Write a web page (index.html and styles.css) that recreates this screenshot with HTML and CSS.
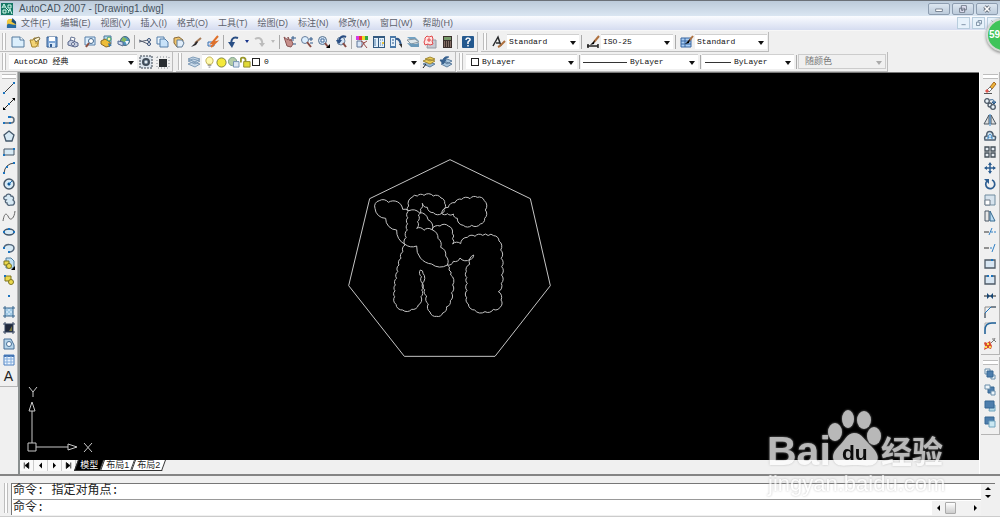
FILE: index.html
```html
<!DOCTYPE html>
<html lang="zh-CN">
<head>
<meta charset="utf-8">
<title>AutoCAD 2007 - [Drawing1.dwg]</title>
<link rel="stylesheet" href="styles.css">
</head>
<body>
<div class="app">
<header class="titlebar">
  <svg class="logo" viewBox="0 0 12 12"><path fill="#167765" d="M0 0h12v12H0z"/><path d="M1 5l2-4 2 4M2 4h2M7 2h3v3H7zM2 7h3v3H2zM7 10l2-4 2 5M5 5l3 3" fill="none" stroke="#d7fff0"/></svg>
  <h1>AutoCAD 2007 - [Drawing1.dwg]</h1>
  <div class="window-buttons">
    <button aria-label="最小化"><svg viewBox="0 0 12 12"><path d="M2 6h8v3H2z" fill="#fff" stroke="#677384"/></svg></button>
    <button aria-label="还原"><svg viewBox="0 0 12 12"><path d="M4 2h6v5H4zM2 5h6v5H2z" fill="#eef" stroke="#5f6977"/><path d="M4 7h2v1H4z" fill="#5f6977"/></svg></button>
    <button aria-label="关闭"><svg viewBox="0 0 12 12"><path d="M3 3l6 6m0-6l-6 6" stroke="#5f6977" stroke-width="4"/><path d="M3 3l6 6m0-6l-6 6" stroke="#fff" stroke-width="2"/></svg></button>
  </div>
</header>
<nav class="menubar">
  <svg class="doc" viewBox="0 0 12 12"><path d="M1 3l2-2h4l4 4v6H1z" fill="#efc73e"/><path d="M7 0l4 4v3L6 4z" fill="#174c7b"/><path d="M1 8c2-4 5 1 10-1v4H1z" fill="#276aa3"/></svg>
  <a href="#">文件(F)</a><a href="#">编辑(E)</a><a href="#">视图(V)</a><a href="#">插入(I)</a><a href="#">格式(O)</a><a href="#">工具(T)</a><a href="#">绘图(D)</a><a href="#">标注(N)</a><a href="#">修改(M)</a><a href="#">窗口(W)</a><a href="#">帮助(H)</a>
  <div class="doc-buttons">
    <button aria-label="最小化图形"><svg viewBox="0 0 12 12"><path d="M3 8h5" stroke="#71869b"/></svg></button>
    <button aria-label="还原图形"><svg viewBox="0 0 12 12"><path d="M5 3h4v4M3 5h4v4H3zM5 3v2M7 7h2" fill="none" stroke="#71869b"/></svg></button>
    <button aria-label="关闭图形"><svg viewBox="0 0 12 12"><path d="M3 3l6 6m0-6l-6 6" stroke="#71869b"/></svg></button>
  </div>
</nav>
<div class="badge">59</div>
<div class="toolbar">
  <div class="bar"><i class="grip"></i>
    <button aria-label="新建"><svg viewBox="0 0 12 12"><path d="M0 1h8l4 3v7H0z" fill="#dceffc" stroke="#547b9e"/><path d="M8 1v3h4" fill="#fff" stroke="#547b9e"/></svg></button>
    <button aria-label="打开"><svg viewBox="0 0 12 12"><path d="M1 4h3l1-2h5L9 8l-2 3H3z" fill="#f3d476" stroke="#a3822a"/><path d="M5 3l5-2 1 2-4 3z" fill="#fff8d3" stroke="#7b6c45"/><path d="M6 7h3v4" stroke="#b8902c" fill="none"/></svg></button>
    <button aria-label="保存"><svg viewBox="0 0 12 12"><path d="M1 1h10v10H1z" fill="#7fa7d6" stroke="#325c91"/><path d="M3 1h6v4H3z" fill="#fff"/><path d="M3 7h6v4H3z" fill="#d8e8f8"/><path d="M4 8h2v3H4z" fill="#325c91"/></svg></button>
    <i class="sep"></i>
    <button aria-label="打印"><svg viewBox="0 0 12 12"><path d="M4 1l4 1-1 4-4-1z" fill="#fff" stroke="#667494"/><path d="M1 6l3-2 7 3v3l-3 1-7-2z" fill="#c6cfe2" stroke="#59678c"/><circle cx="6" cy="8" r="1.5" fill="#fff" stroke="#59678c"/></svg></button>
    <button aria-label="打印预览"><svg viewBox="0 0 12 12"><path d="M1 1h10v8H1z" fill="#dcefff" stroke="#567fa8"/><circle cx="7" cy="5" r="2.5" fill="#fff" stroke="#41668c"/><path d="M5 7l-3 4" stroke="#8e4e3e" stroke-width="2"/></svg></button>
    <button aria-label="发布"><svg viewBox="0 0 12 12"><path d="M3 0h7v8H3z" fill="#b7daef" stroke="#4a769b"/><path d="M0 5l4-2 5 3v4l-4 1-5-3z" fill="#edbd37" stroke="#8a6823"/><circle cx="8" cy="3" r="2" fill="#fff4a7" stroke="#397"/><path d="M7 7l4 2-3 2z" fill="#3878af"/></svg></button>
    <button aria-label="三维 DWF"><svg viewBox="0 0 12 12"><circle cx="7" cy="5" r="4.5" fill="#4e94bf" stroke="#4d6b7d"/><path d="M5 1l4 2-2 3-4-1z" fill="#87b961"/><path d="M7 5h4l-2 4z" fill="#f3f7ff"/><path d="M0 5l5 1v4l-5-2z" fill="#cbd7ec" stroke="#536b94"/></svg></button>
    <i class="sep"></i>
    <button aria-label="剪切"><svg viewBox="0 0 12 12"><path d="M0 4l9 4M0 6l9-2" stroke="#555e70"/><circle cx="10" cy="4" r="1.5" fill="none" stroke="#344d76"/><circle cx="10" cy="8" r="1.5" fill="none" stroke="#344d76"/></svg></button>
    <button aria-label="复制"><svg viewBox="0 0 12 12"><path d="M1 1h7v7H1z" fill="#edf7ff" stroke="#557eaa"/><path d="M4 3h5l3 3v5H4z" fill="#c8e2f9" stroke="#557eaa"/></svg></button>
    <button aria-label="粘贴"><svg viewBox="0 0 12 12"><path d="M1 2l5-1 4 3-1 6-5 1-3-4z" fill="#efc46a" stroke="#8c6a36"/><path d="M4 4h5l2 3-2 4H4z" fill="#e1eefa" stroke="#607c98"/></svg></button>
    <button aria-label="特性匹配"><svg viewBox="0 0 12 12"><path d="M11 2L5 7" stroke="#a77b58" stroke-width="2"/><path d="M7 5L1 11l5-2 2-3z" fill="#29272b"/></svg></button>
    <button aria-label="块编辑器"><svg viewBox="0 0 12 12"><path d="M1 6h6v4H1z" fill="#dae7ff" stroke="#3970ae"/><path d="M11 0L5 7l4-1-5 5" stroke="#df712b" stroke-width="2" fill="none"/></svg></button>
    <i class="sep"></i>
    <button aria-label="放弃"><svg viewBox="0 0 12 12"><path d="M10 2C5 0 2 4 4 10" fill="none" stroke="#294e84" stroke-width="2"/><path d="M0 6l4 6 3-6z" fill="#294e84"/></svg></button>
    <button class="caret" aria-label="放弃列表"></button>
    <button aria-label="重做"><svg viewBox="0 0 12 12"><path d="M1 3c5-3 8 1 7 6" fill="none" stroke="#bdbdbd" stroke-width="2"/><path d="M5 7h6l-3 4z" fill="#bbb"/></svg></button>
    <button class="caret faint" aria-label="重做列表"></button>
    <i class="sep"></i>
    <button aria-label="实时平移"><svg viewBox="0 0 12 12"><path d="M0 1l4 3V1l2 4 1-2 2 5-2 3-4-1z" fill="#c78f8b" stroke="#8a5555"/><path d="M9 0v5M7 2h5M9 8h3" stroke="#315a8b"/></svg></button>
    <button aria-label="实时缩放"><svg viewBox="0 0 12 12"><circle cx="4" cy="4" r="3.5" fill="#dcefff" stroke="#687f9d"/><path d="M6 6l4 5" stroke="#884d45" stroke-width="2"/><path d="M8 3h4M10 1v4M9 7h3" stroke="#315a8b"/></svg></button>
    <button aria-label="窗口缩放"><svg viewBox="0 0 12 12"><circle cx="4.500" cy="4.500" r="4" fill="#d3e4f5" stroke="#55718f"/><path d="M3 3h3v3H3z" fill="#fff" stroke="#406b99"/><path d="M7 7l3 4" stroke="#884d45" stroke-width="2"/><path d="M12 8v4H8z"/></svg></button>
    <button aria-label="缩放上一个"><svg viewBox="0 0 12 12"><circle cx="6" cy="5" r="4" fill="#d3e4f5" stroke="#6a8199"/><path d="M8 7l3 4" stroke="#884d45" stroke-width="2"/><path d="M11 1C7-1 4 2 4 6" fill="none" stroke="#294e84" stroke-width="2"/><path d="M1 4h6L4 8z" fill="#294e84"/></svg></button>
    <i class="sep"></i>
    <button aria-label="特性"><svg viewBox="0 0 12 12"><path d="M0 0h3v4H0z" fill="#d23be2"/><path d="M3 0h3v4H3z" fill="#ef3535"/><path d="M6 0h3v4H6z" fill="#eadb26"/><path d="M9 0h3v4H9z" fill="#35a64a"/><path d="M1 5h5v6H1z" fill="#d9e7f7" stroke="#607797"/><path d="M5 5l3 2 3-2M7 7l4 5M9 6l-4 5" stroke="#9b4b47" fill="none"/></svg></button>
    <button aria-label="设计中心"><svg viewBox="0 0 12 12"><path d="M0 0h12v12H0z" fill="#335a80"/><path d="M1 2h4v9H1zM6 2h5v9H6z" fill="#e4f0fa"/><path d="M2 3v7M7 4h1m1 0h1M7 7h1m1 0h1M7 9h1m1 0h1" stroke="#5280aa"/><path d="M9 6h2v2H9z" fill="#eac23d"/></svg></button>
    <button aria-label="工具选项板"><svg viewBox="0 0 12 12"><path d="M0 0h6v12H0z" fill="#4b79a8"/><path d="M1 2h4v8H1z" fill="#e4f0fa"/><path d="M2 4h2M2 7h2" stroke="#315a8b"/><path d="M6 3c4-1 4 3 5 6" fill="none" stroke="#315a8b" stroke-width="2"/><path d="M9 8h3v4z" fill="#333"/></svg></button>
    <button aria-label="图纸集管理器"><svg viewBox="0 0 12 12"><path d="M0 1h8l4 4H5z" fill="#71a2c4"/><path d="M0 4l8-1 4 3-8 2z" fill="#dde6ea" stroke="#87959e"/><path d="M0 7l8 1 4-1v4H4z" fill="#6b9ab9"/></svg></button>
    <button aria-label="标记集管理器"><svg viewBox="0 0 12 12"><path d="M4 4h8v8H3z" fill="#c6cad2" stroke="#969ba5"/><path d="M1 2l2-2 2 1 3-1 1 3-1 2 1 3-3 1-2-1-3 1-1-3 1-2z" fill="#ffe5e3" stroke="#e1484a"/><path d="M3 4h4M5 2v4" stroke="#e1484a"/></svg></button>
    <button aria-label="快速计算器"><svg viewBox="0 0 12 12"><path d="M2 0h9v12H2z" fill="#3b302d"/><path d="M3 1h7v3H3z" fill="#759969"/><path d="M3 6h7M3 8h7M3 10h7" stroke="#d0afa2" stroke-dasharray="1 1"/></svg></button>
    <i class="sep"></i>
    <button aria-label="帮助"><svg viewBox="0 0 12 12"><rect width="12" height="12" rx="1" fill="#24598f"/><path d="M4 4c0-3 5-2 4 0L6 6v2M6 9v1.500" fill="none" stroke="#fff" stroke-width="1.500"/></svg></button>
  </div>
  <div class="bar styles"><i class="grip"></i>
    <button aria-label="文字样式"><svg viewBox="0 0 12 12"><path d="M0 10L5 1l3 9M3 7h4" fill="none" stroke="#292b2d" stroke-width="1.500"/><path d="M12 5L7 10l-2 1" stroke="#ae703e" stroke-width="2" fill="none"/></svg></button>
    <label class="combo w-style"><select aria-label="文字样式名称"><option>Standard</option></select></label><i class="sep"></i>
    <button aria-label="标注样式"><svg viewBox="0 0 12 12"><path d="M0 10h11M1 8v4m10-4v4" stroke="#222" stroke-width="1.500"/><path d="M12 0L7 6" stroke="#ae703e" stroke-width="2"/><path d="M8 4L3 9l4-1z"/></svg></button>
    <label class="combo w-style"><select aria-label="标注样式名称"><option>ISO-25</option></select></label><i class="sep"></i>
    <button aria-label="表格样式"><svg viewBox="0 0 12 12"><path d="M0 2h10v9H0z" fill="#a9cdf3" stroke="#3966a1"/><path d="M0 5h10M0 8h10M4 2v9" stroke="#3966a1"/><path d="M12 0L8 5" stroke="#ae703e" stroke-width="2"/><path d="M9 3L4 8l4-1z"/></svg></button>
    <label class="combo w-style"><select aria-label="表格样式名称"><option>Standard</option></select></label>
  </div>
</div>
<div class="toolbar second">
  <div class="bar"><i class="grip"></i>
    <label class="combo w-space"><select aria-label="工作空间"><option>AutoCAD 经典</option></select></label>
    <button aria-label="工作空间设置"><svg viewBox="0 0 12 12"><path d="M0 0h12v12H0z" fill="#dce4ec" stroke="#38434f" stroke-dasharray="2 1"/><circle cx="6" cy="6" r="3" fill="#9caebe" stroke="#414c58" stroke-width="2"/><circle cx="6" cy="6" r="1" fill="#fff"/></svg></button>
    <button aria-label="我的工作空间"><svg viewBox="0 0 12 12"><path d="M2 3h8v8H2z" fill="#292d31"/><path d="M0 1h12v11H0z" fill="none" stroke="#858c93" stroke-dasharray="1 2"/></svg></button>
  </div>
  <div class="bar layers"><i class="grip"></i>
    <button aria-label="图层特性管理器"><svg viewBox="0 0 12 12"><g stroke="#7f9cb8" fill="#c9dae9"><path d="M0 8l5-2 7 2-5 3zM0 5l5-2 7 2-5 3zM0 3l5-2 7 2-5 3z"/></g></svg></button>
    <label class="combo w-layer">
      <svg viewBox="0 0 12 12"><path d="M4 8C0 4 3 0 6 0s6 4 2 8z" fill="#fff9ae" stroke="#b8a641"/><path d="M4 9h4M5 11h2" stroke="#777"/></svg>
      <svg viewBox="0 0 12 12"><circle cx="6" cy="6" r="5" fill="#f4e93a" stroke="#777d3b"/></svg>
      <svg viewBox="0 0 12 12"><circle cx="5" cy="5" r="4.500" fill="#b4cda7" stroke="#789b8a"/><path d="M6 5h6v6H6z" fill="#dce6f1" stroke="#718fb1"/></svg>
      <svg viewBox="0 0 12 12"><path d="M1 6V2c0-2 5-2 5 1v2" fill="none" stroke="#99982c" stroke-width="2"/><path d="M4 5h7v6H4z" fill="#e1da36" stroke="#8c872b"/></svg>
      <i class="swatch"></i><select aria-label="图层"><option>0</option></select></label>
    <button aria-label="置为当前图层"><svg viewBox="0 0 12 12"><path d="M0 8l5-2 7 2-5 3z" fill="#9cb8d1" stroke="#5f7f9f"/><path d="M0 5l5-2 7 2-5 3zM2 3l5-2 5 2-5 2z" fill="#eed057" stroke="#a28a39"/><path d="M0 12l3-4" stroke="#222"/></svg></button>
    <button aria-label="上一个图层"><svg viewBox="0 0 12 12"><path d="M1 8l5-2 6 2-5 3zM3 5l4-2 5 2-5 3z" fill="#a8c6df" stroke="#5f7f9f"/><path d="M9 1C5 0 3 2 3 5M0 4h6L3 8z" fill="#36608e" stroke="#36608e"/></svg></button>
  </div>
  <div class="bar props"><i class="grip"></i>
    <label class="combo w-color"><i class="swatch"></i><select aria-label="颜色"><option>ByLayer</option></select></label><i class="sep"></i>
    <label class="combo w-type"><i class="rule long"></i><select aria-label="线型"><option>ByLayer</option></select></label><i class="sep"></i>
    <label class="combo w-weight"><i class="rule"></i><select aria-label="线宽"><option>ByLayer</option></select></label><i class="sep"></i>
    <label class="combo w-plot off"><select aria-label="打印样式" disabled><option>随颜色</option></select></label>
  </div>
</div>
<main class="work">
  <aside class="side left"><div class="palette"><i class="grip-h"></i>
    <button aria-label="直线"><svg viewBox="0 0 12 12"><path d="M1 11L11 1" stroke="#444"/><path d="M0 10h2v2H0zM10 0h2v2h-2z" fill="#1c73bd"/></svg></button>
    <button aria-label="构造线"><svg viewBox="0 0 12 12"><path d="M1 11L11 1" stroke="#222"/><path d="M0 9l3 3H0zM9 0h3v3z"/><path d="M5 5h2v2H5z" fill="#1c73bd"/></svg></button>
    <button aria-label="多段线"><svg viewBox="0 0 12 12"><path d="M1 9h7c4 0 4-6 0-6" fill="none" stroke="#596b7c" stroke-width="1.500"/><path d="M0 8h2v2H0zM6 8h2v2H6zM5 2h3v2H5z" fill="#1c73bd"/></svg></button>
    <button aria-label="正多边形"><svg viewBox="0 0 12 12"><path d="M6 1l5 4-2 6H3L1 5z" fill="#d7e9f4" stroke="#43576a" stroke-width="1.300"/></svg></button>
    <button aria-label="矩形"><svg viewBox="0 0 12 12"><path d="M1 3h10v6H1z" fill="#d7e9f4" stroke="#475667"/><path d="M0 8h2v2H0zM10 2h2v2h-2z" fill="#1c73bd"/></svg></button>
    <button aria-label="圆弧"><svg viewBox="0 0 12 12"><path d="M1 11Q2 2 11 1" fill="none" stroke="#444"/><path d="M0 10h2v2H0zM3 4h2v2H3zM10 0h2v2h-2z" fill="#1c73bd"/></svg></button>
    <button aria-label="圆"><svg viewBox="0 0 12 12"><circle cx="6" cy="6" r="5" fill="#d7e9f4" stroke="#47586a" stroke-width="1.500"/><path d="M6 6l3-3M5 5h2v2H5z" stroke="#1c73bd"/></svg></button>
    <button aria-label="修订云线"><svg viewBox="0 0 12 12"><path d="M3 6C0 6 0 2 3 2c1-3 5-2 5 0 3 0 3 3 2 4 3 2 1 6-2 5-2 1-4 0-4-2-2 0-2-2-1-3z" fill="#d7e9f4" stroke="#526579" stroke-width="1.300"/></svg></button>
    <button aria-label="样条曲线"><svg viewBox="0 0 12 12"><path d="M0 11C2-1 5 6 6 8s5 2 6-7" fill="none" stroke="#666"/></svg></button>
    <button aria-label="椭圆"><svg viewBox="0 0 12 12"><ellipse cx="6" cy="6" rx="5" ry="3" fill="#d7e9f4" stroke="#44576a" stroke-width="1.500"/><path d="M0 5h2v2H0zM10 5h2v2h-2zM5 2h2v2H5z" fill="#1c73bd"/></svg></button>
    <button aria-label="椭圆弧"><svg viewBox="0 0 12 12"><path d="M1 6c1-5 10-4 10 0 0 2-2 4-4 4" fill="#d7e9f4" stroke="#526579" stroke-width="1.500"/><path d="M0 5h2v2H0zM5 9h2v2H5z" fill="#1c73bd"/></svg></button>
    <button aria-label="插入块"><svg viewBox="0 0 12 12"><path d="M3 0h5l3 3v7H3z" fill="#c0dff3" stroke="#507f9f"/><path d="M1 3h5v4H1z" fill="#ecd94b" stroke="#7d7423"/><circle cx="6" cy="8" r="2.500" fill="#ecd94b" stroke="#7d7423"/><path d="M12 8v4H8z"/></svg></button>
    <button aria-label="创建块"><svg viewBox="0 0 12 12"><path d="M2 2h6v5H2z" fill="#ecd94b" stroke="#7d7423"/><circle cx="8" cy="8" r="2.500" fill="#ecd94b" stroke="#7d7423"/><path d="M1 1h2v2H1z" fill="#1c73bd"/></svg></button>
    <button aria-label="点"><svg viewBox="0 0 12 12"><path d="M5 5h2v2H5z" fill="#1c73bd"/></svg></button>
    <button aria-label="图案填充"><svg viewBox="0 0 12 12"><path d="M2 2h8v8H2z" fill="#c6e1f4"/><path d="M2 6l4-4M2 10l8-8M6 10l4-4M2 6l4 4M2 2l8 8M6 2l4 4" stroke="#a3cbe6"/><path d="M2 0v12M10 0v12M0 2h12M0 10h12" stroke="#35658d"/></svg></button>
    <button aria-label="渐变色"><svg viewBox="0 0 12 12"><path d="M2 2h8v8H2z" fill="#20283b"/><path d="M6 9l3-5v5z" fill="#77743c"/><path d="M2 0v12M10 0v12M0 2h12M0 10h12" stroke="#34455f"/></svg></button>
    <button aria-label="面域"><svg viewBox="0 0 12 12"><path d="M1 1h7l3 6v4H1z" fill="#b6d5eb" stroke="#486f96"/><circle cx="6" cy="6" r="2.500" fill="#f8fcff" stroke="#486f96"/></svg></button>
    <button aria-label="表格"><svg viewBox="0 0 12 12"><path d="M1 1h10v10H1z" fill="#edf6ff" stroke="#4b7fc0"/><path d="M1 2h10" stroke="#4374b3" stroke-width="2"/><path d="M1 5h10M1 8h10M4 2v9M8 2v9" stroke="#83acdc"/></svg></button>
    <button class="letter" aria-label="多行文字">A</button>
  </div></aside>
  <section class="model">
    <div class="canvas">
      <svg class="drawing" viewBox="0 0 660 645" aria-label="图形">
        <path d="M330 29L571 146 631 407 465 619H193L26 407 89 146z"/>
        <path d="M105 175A17 17 0 0 1 118 152 20 20 0 0 1 145 157 28 28 0 0 1 188 178 22 22 0 0 1 207 182 28 28 0 0 1 238 188 24 24 0 0 1 264 209 24 24 0 0 1 277 240 24 24 0 0 1 294 265 24 24 0 0 1 302 292 24 24 0 0 1 317 318 24 24 0 0 1 322 345 40 40 0 0 1 275 342 50 50 0 0 1 230 288 36 36 0 0 1 195 283 44 44 0 0 1 170 240 34 34 0 0 1 137 205 32 32 0 0 1 105 175z"/>
        <path class="cloud" data-points="204,185 206,168 216,142 232,138 252,136 280,138 303,144 314,160 312,178 305,190 325,172 345,158 365,148 390,146 412,142 433,152 436,180 434,205 421,222 395,226 370,226 352,205 340,192 305,190"/>
        <path class="cloud" data-points="305,190 280,188 262,172 247,160 235,195 230,235 252,241 275,239 300,228 325,228 337,250 338,282 362,281 382,262 405,259 428,256 461,257 477,273 482,300 485,350 484,400 475,425 483,450 480,472 460,478 435,485 404,480 385,462 380,443 382,400 379,365 389,343 401,315 390,328 360,324 340,334 322,345 332,375 338,405 331,452 308,489 290,499 270,486 260,438 248,400 241,360 249,370 247,400 243,440 235,465 215,478 188,480 168,463 164,440 166,405 177,345 195,285 202,240 204,185"/>
      </svg>
      <svg class="ucs" viewBox="0 0 72 68"><path d="M6 56h8v8H6zM10 56V24M7 24l3-9 3 9zM14 60h32M46 57l9 3-9 3zM7 0l4 5v5M15 0l-4 5M62 56l8 9M70 56l-8 9"/></svg>
    </div>
    <div class="tabs">
      <button class="nav" aria-label="第一个"><svg viewBox="0 0 12 12"><path d="M3 2v8M9 2v8L4 6z" stroke="#000"/></svg></button><button class="nav" aria-label="上一个"><svg viewBox="0 0 12 12"><path d="M8 2v8L4 6z"/></svg></button><button class="nav" aria-label="下一个"><svg viewBox="0 0 12 12"><path d="M4 2v8l4-4z"/></svg></button><button class="nav" aria-label="最后一个"><svg viewBox="0 0 12 12"><path d="M9 2v8M3 2v8l5-4z" stroke="#000"/></svg></button>
      <button class="tab on"><span>模型</span></button><button class="tab"><span>布局1</span></button><button class="tab"><span>布局2</span></button>
    </div>
  </section>
  <aside class="side right"><div class="palette"><i class="grip-h"></i>
    <button aria-label="删除"><svg viewBox="0 0 12 12"><path d="M6 5l4-5 2 2-4 5z" fill="#efb53b" stroke="#a66a22"/><path d="M3 8l3-3 2 2-3 3z" fill="#fff" stroke="#777"/><path d="M1 9l2-2 2 2-2 2z" fill="#de554c"/><path d="M0 11.500h8" stroke="#555"/></svg></button>
    <button aria-label="复制对象"><svg viewBox="0 0 12 12"><g fill="#e7f0f7" stroke="#4d5966" stroke-width="1.300"><circle cx="3" cy="3" r="2.300"/><circle cx="6" cy="7" r="2"/><circle cx="9" cy="9" r="2.300"/></g><path d="M6 2c4-1 4 0 4 3M8 4h4l-2 2z" fill="none" stroke="#24588b"/></svg></button>
    <button aria-label="镜像"><svg viewBox="0 0 12 12"><path d="M5 1v9H0zM7 1v9h5z" fill="#ddd" stroke="#4b5661"/><path d="M6 0v12" stroke="#3180c5"/></svg></button>
    <button aria-label="偏移"><svg viewBox="0 0 12 12"><path d="M1 10c-1-3 0-4 2-4C1 0 10 0 9 6c3 0 3 1 2 4z" fill="#d7e9f4" stroke="#4f5f70" stroke-width="1.500"/><path d="M3 8h2c-2-5 4-5 2 0h2" fill="none" stroke="#3180c5"/></svg></button>
    <button aria-label="阵列"><svg viewBox="0 0 12 12"><path d="M1 1h4v4H1zM7 1h4v4H7zM1 7h4v4H1zM7 7h4v4H7z" fill="#e4eaf0" stroke="#46505a" stroke-width="1.300"/></svg></button>
    <button aria-label="移动"><svg viewBox="0 0 12 12"><path d="M6 1v10M1 6h10" stroke="#2c5d91" stroke-width="1.500"/><path d="M6 0l2 3H4zM6 12l2-3H4zM0 6l3-2v4zM12 6L9 4v4z" fill="#2c5d91"/></svg></button>
    <button aria-label="旋转"><svg viewBox="0 0 12 12"><path d="M3 3a4.500 4.500 0 1 0 5-1" fill="none" stroke="#2c5d91" stroke-width="1.700"/><path d="M0 1h5v5z" fill="#2c5d91"/></svg></button>
    <button aria-label="缩放"><svg viewBox="0 0 12 12"><path d="M1 1h10v10H1z" fill="#d7e3ed" stroke="#718c9f"/><path d="M1 6h5v5H1z" fill="#fff" stroke="#6e7a87"/></svg></button>
    <button aria-label="拉伸"><svg viewBox="0 0 12 12"><path d="M1 1h4v10H1z" fill="#e7e7e7" stroke="#4d5966"/><path d="M6 1l5 10H6z" fill="#bdddf3" stroke="#34688e"/></svg></button>
    <button aria-label="修剪"><svg viewBox="0 0 12 12"><path d="M0 6h5" stroke="#333"/><path d="M5 9l3-7" stroke="#3180c5"/><path d="M7 6h5" stroke="#3180c5" stroke-dasharray="2 1"/></svg></button>
    <button aria-label="延伸"><svg viewBox="0 0 12 12"><path d="M0 6h5" stroke="#333"/><path d="M6 6h3" stroke="#3180c5" stroke-dasharray="2 1"/><path d="M8 10l3-8" stroke="#3180c5"/></svg></button>
    <button aria-label="打断于点"><svg viewBox="0 0 12 12"><path d="M1 2h10v8H1z" fill="#d8e6f2" stroke="#4d5966" stroke-width="1.300"/><path d="M7 1h2v2H7z" fill="#1c73bd"/></svg></button>
    <button aria-label="打断"><svg viewBox="0 0 12 12"><path d="M4 2H1v8h10V2H8" fill="#d8e6f2" stroke="#4d5966" stroke-width="1.300"/><path d="M3 1h2v2H3zM7 1h2v2H7z" fill="#1c73bd"/></svg></button>
    <button aria-label="合并"><svg viewBox="0 0 12 12"><path d="M0 6h12" stroke="#222"/><path d="M3 3l3 3-3 3zM9 3L6 6l3 3z" fill="#174775"/></svg></button>
    <button aria-label="倒角"><svg viewBox="0 0 12 12"><path d="M1 12V1h11" fill="none" stroke="#8b8b8b"/><path d="M1 12V7l6-6h5" fill="none" stroke="#394c60"/><path d="M1 7l6-6" stroke="#1c73bd"/></svg></button>
    <button aria-label="圆角"><svg viewBox="0 0 12 12"><path d="M1 12V1h11" fill="none" stroke="#aaa"/><path d="M1 12V8c0-5 3-7 7-7h4" fill="none" stroke="#24679e" stroke-width="1.500"/></svg></button>
    <button aria-label="分解"><svg viewBox="0 0 12 12"><path d="M1 4l2 1 3-2 1 3 1 2-1 3-3-1-4 2 1-4-1-3z" fill="#d74932"/><path d="M3 5h2v2H3zM5 8h2v2H5zM1 8h2v2H1z" fill="#f9dc49"/><path d="M7 5l3-3 2 2M9 0v2M11 0l-1 2" stroke="#777" fill="none"/></svg></button>
  </div><div class="palette order"><i class="grip-h"></i>
    <button aria-label="前置"><svg viewBox="0 0 12 12"><path d="M1 1h5v5H1zM7 7h4v4H7z" fill="#edf5fa" stroke="#6b8eaa"/><path d="M3 3h6v6H3z" fill="#4d7ead" stroke="#376693"/></svg></button>
    <button aria-label="后置"><svg viewBox="0 0 12 12"><path d="M4 3h6v6H4z" fill="#4d7ead" stroke="#376693"/><path d="M1 1h5v4H1zM7 7h4v4H7z" fill="#edf5fa" stroke="#6b8eaa"/></svg></button>
    <button aria-label="置于对象之上"><svg viewBox="0 0 12 12"><path d="M6 5h5v6H5z" fill="#b5dbea" stroke="#70a3bd"/><path d="M1 1h9v7H1z" fill="#4d7ead" stroke="#376693"/></svg></button>
    <button aria-label="置于对象之下"><svg viewBox="0 0 12 12"><path d="M1 1h9v7H1z" fill="#4d7ead" stroke="#376693"/><path d="M5 5h6v6H5z" fill="#cae8f3" stroke="#70a3bd"/></svg></button>
  </div></aside>
</main>
<footer class="command">
  <i class="grip"></i>
  <div class="console">
    <div class="history">命令: 指定对角点:</div>
    <div class="entry"><label for="cmd">命令:</label><input id="cmd" type="text"><div class="hscroll"><button aria-label="向左滚动"><svg viewBox="0 0 12 12"><path d="M8 3v6L5 6z"/></svg></button><i class="thumb"></i><button aria-label="向右滚动"><svg viewBox="0 0 12 12"><path d="M5 3v6l3-3z"/></svg></button></div></div>
  </div>
  <div class="vscroll"><button aria-label="向上滚动"><svg viewBox="0 0 12 12"><path d="M3 8h6L6 5z"/></svg></button><button aria-label="向下滚动"><svg viewBox="0 0 12 12"><path d="M3 5h6L6 8z"/></svg></button></div>
</footer>
<svg class="watermark" viewBox="0 0 190 90" role="img" aria-label="Baidu 经验">
  <g fill="#fff"><text class="brand" x="5" y="60">Bai</text><text class="exp" x="119" y="58">经验</text>
  <ellipse cx="73" cy="27" rx="7" ry="9"/><ellipse cx="86" cy="14" rx="6" ry="9"/><ellipse cx="102" cy="15" rx="7" ry="9"/><ellipse cx="112" cy="31" rx="7" ry="9"/>
  <path d="M92 28c8 0 11 8 17 13 6 6 8 11 6 15-3 7-14 4-22 4s-18 3-21-4c-2-5-1-9 5-15 5-4 8-13 15-13z"/></g>
  <text class="du" x="80" y="55">du</text><text class="url" x="6" y="86">jingyan.baidu.com</text>
</svg>
</div>
<script src="script.js"></script>
</body>
</html>
```
FILE: styles.css
```css
* { box-sizing: border-box; }
body { margin: 0; background: #f0f0f0; font-family: "Liberation Sans", "Noto Sans CJK SC", sans-serif; overflow: hidden; }
.app { display: flex; flex-direction: column; height: 100vh; position: relative; overflow: hidden; }
button { border: 0; padding: 0; margin: 0; background: none; display: flex; align-items: center; justify-content: center; flex: none; color: #222; }
svg { display: block; flex: none; width: 12px; height: 12px; overflow: visible; }
i { display: block; flex: none; }
.titlebar { height: 16px; flex: none; display: flex; align-items: center; gap: 6px; padding: 0 2px 0 1px; background: linear-gradient(#bccbda, #dae6f2); border-top: 1px solid #6b7178; }
.titlebar h1 { margin: 0; font: 10px/14px "Liberation Sans", sans-serif; color: #46525e; flex: 1; }
.window-buttons, .doc-buttons { display: flex; gap: 2px; }
.window-buttons button { width: 22px; height: 12px; border: 1px solid #8d9db0; border-radius: 2px; background: linear-gradient(#dce6f0, #bccbdb); }
.window-buttons svg { width: 10px; height: 10px; }
.menubar { height: 15px; flex: none; display: flex; align-items: center; gap: 10px; padding: 0 0 0 6px; background: linear-gradient(#fafcff, #d5dcf0); border-bottom: 1px solid #f7f7f7; }
.menubar a { font: 9px/14px "Liberation Sans", "Noto Sans CJK SC", sans-serif; color: #5d626d; text-decoration: none; white-space: nowrap; }
.menubar .doc { width: 11px; height: 11px; margin-right: -6px; }
.doc-buttons { margin-left: auto; }
.doc-buttons button { width: 13px; height: 12px; border: 1px solid #b8cddd; background: #e7f2fb; }
.doc-buttons svg { width: 10px; height: 10px; }
.badge { position: absolute; right: -20px; top: 18px; width: 34px; height: 34px; border-radius: 50%; background: #3fc45a; border: 2px solid #d4d9d4; box-shadow: 0 1px 3px #888; color: #fff; font: bold 10px/30px "Liberation Sans", sans-serif; padding-left: 1px; }
.toolbar { display: flex; height: 21px; flex: none; padding-top: 1px; }
.bar { display: flex; align-items: center; height: 20px; border: solid #bcbcbc; border-width: 0 1px 1px 0; padding-right: 1px; }
.bar button { width: 17px; height: 18px; }
.grip { width: 4px; height: 17px; margin: 0 3px 0 2px; border: solid #bdbdbd; border-width: 0 1px; background: #fcfcfc; }
.sep { width: 1px; height: 14px; margin: 0 1px 0 2px; background: #aaa; }
.bar .caret { width: 9px; }
.caret::after { content: ""; border: 2px solid transparent; border-top: 3px solid #17338a; border-bottom: 0; }
.caret.faint::after { border-top-color: #bbb; }
.styles { margin-left: 3px; }
.combo { position: relative; display: flex; align-items: center; height: 15px; background: #fff; border-top: 1px solid #d0d0d0; }
.combo select { appearance: none; border: 0; border-radius: 0; background: none; margin: 0; padding: 0 10px 0 3px; flex: 1; min-width: 0; height: 14px; color: #111; opacity: 1; font: 8px/14px "Liberation Mono", "Noto Sans CJK SC", monospace; }
.combo::after { content: ""; position: absolute; right: 3px; top: 6px; border: 3px solid transparent; border-top: 4px solid #111; border-bottom: 0; pointer-events: none; }
.w-style { width: 72px; }
.w-style select { padding-left: 2px; }
.w-style + .sep { margin: 0 2px; }
.second { height: 20px; padding-top: 0; }
.w-space { width: 128px; }
.w-space select { padding-left: 5px; }
.layers { margin-left: 3px; }
.w-layer { width: 218px; padding-left: 2px; gap: 1px; }
.w-layer svg { width: 11px; height: 11px; }
.swatch { width: 8px; height: 8px; border: 1px solid #222; background: #fff; }
.props { margin-left: 1px; }
.w-color { width: 111px; padding-left: 5px; }
.w-type { width: 117px; padding-left: 2px; }
.w-weight { width: 92px; padding-left: 3px; }
.rule { width: 26px; height: 1px; background: #333; }
.rule.long { width: 44px; }
.w-plot { width: 88px; border: 1px solid #ccc; background: #f0f0f0; }
.combo.w-plot select { font-size: 9px; color: #777; padding-left: 6px; }
.combo.off::after { border-top-color: #aaa; }
.work { flex: 1; display: flex; min-height: 0; }
.side { width: 20px; flex: none; display: flex; flex-direction: column; }
.left { border-right: 2px solid #8a8f8f; }
.right { border-left: 1px solid #fff; padding-left: 1px; width: 21px; }
.palette { border: solid #b5b5b5; border-width: 0 1px 1px 0; padding-bottom: 2px; }
.palette button { width: 17px; height: 16px; }
.right .palette button { width: 18px; }
.grip-h { height: 5px; margin: 2px 1px 1px 2px; border: solid #bdbdbd; border-width: 1px 0; background: #fff; }
.order { padding: 1px 0 4px; margin-top: 2px; }
.palette .letter { font: 14px/16px "Liberation Sans", sans-serif; }
.model { flex: 1; display: flex; flex-direction: column; min-width: 0; }
.canvas { flex: 1; background: #000; border-top: 1px solid #777; position: relative; overflow: hidden; }
.drawing { position: absolute; left: 320px; top: 77px; width: 220px; height: 215px; fill: none; stroke: #c4c4c4; stroke-width: 3px; }
.ucs { position: absolute; left: 2px; bottom: 5px; width: 72px; height: 68px; fill: none; stroke: #c8c8c8; }
.tabs { height: 14px; flex: none; display: flex; align-items: flex-start; }
.nav { width: 14px; height: 11px; border-right: 1px solid #ccc; background: #fafafa; }
.nav svg { width: 9px; height: 9px; }
.tab { height: 11px; padding: 0 3px; transform: skewX(-20deg); border: solid #333; border-width: 0 1px 1px; background: #fff; font: 9px/10px "Liberation Sans", "Noto Sans CJK SC", sans-serif; }
.tab span { display: block; transform: skewX(20deg); }
.tab.on { background: #000; color: #fff; }
.command { height: 43px; flex: none; display: flex; border-top: 2px solid #858585; padding: 7px 5px 1px 2px; border-bottom: 1px solid #ccc; font: 12px/15px "Liberation Mono", "Noto Sans CJK SC", monospace; color: #222; }
.command .grip { height: 30px; }
.console { flex: 1; border: solid #777; border-width: 1px 0 0 1px; background: #fff; min-width: 0; padding-left: 1px; }
.history { height: 16px; border-bottom: 1px solid #999; line-height: 14px; }
.entry { display: flex; align-items: center; height: 15px; }
.entry label { padding-top: 2px; }
.entry input { flex: 1; min-width: 0; border: 0; outline: 0; padding: 0; height: 12px; background: none; font: inherit; }
.hscroll { width: 49px; height: 14px; display: flex; justify-content: space-between; background: #f2f2f2; }
.hscroll .thumb { width: 11px; height: 12px; margin: 1px 12px 0 0; border: 1px solid #aaa; border-radius: 1px; background: linear-gradient(#fff, #ccc); }
.vscroll { width: 14px; height: 17px; border-top: 1px solid #777; }
.vscroll button { width: 14px; height: 8px; }
.watermark { position: absolute; right: 48px; bottom: 22px; width: 190px; height: 90px; opacity: .72; pointer-events: none; filter: drop-shadow(0 0 1px #aaa); }
.brand { font: bold 41px "Liberation Sans", sans-serif; }
.exp { font: bold 31px "Noto Sans CJK SC", sans-serif; }
.du { font: bold 21px "Liberation Sans", sans-serif; fill: #111; }
.url { font: 22px "Liberation Sans", sans-serif; fill: #fff; }
```
FILE: script.js
```js
// Turns each polyline into a revision cloud: short arcs bulging outwards.
document.querySelectorAll(".cloud").forEach(function (path) {
  var pts = path.dataset.points.split(" ").map(function (p) { return p.split(",").map(Number); });
  var d = "M" + pts[0];
  pts.slice(1).forEach(function (b, i) {
    var a = pts[i];
    var len = Math.hypot(b[0] - a[0], b[1] - a[1]);
    var n = Math.max(1, Math.round(len / 21));
    var r = len / n * 0.7;
    for (var k = 1; k <= n; k++) {
      d += "A" + r + " " + r + " 0 0 1 " + (a[0] + (b[0] - a[0]) * k / n) + " " + (a[1] + (b[1] - a[1]) * k / n);
    }
  });
  path.setAttribute("d", d);
});
```
